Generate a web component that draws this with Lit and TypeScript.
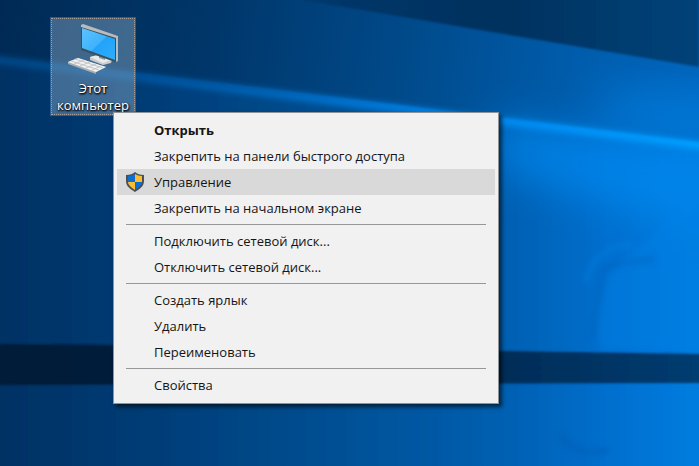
import { LitElement, html, css, svg, nothing } from "lit";
import { customElement, property } from "lit/decorators.js";
import { classMap } from "lit/directives/class-map.js";

interface MenuEntry {
  label: string;
  primary?: boolean;
  shield?: boolean;
  active?: boolean;
}

const GROUPS: MenuEntry[][] = [
  [
    { label: "Открыть", primary: true },
    { label: "Закрепить на панели быстрого доступа" },
    { label: "Управление", shield: true, active: true },
    { label: "Закрепить на начальном экране" },
  ],
  [{ label: "Подключить сетевой диск..." }, { label: "Отключить сетевой диск..." }],
  [{ label: "Создать ярлык" }, { label: "Удалить" }, { label: "Переименовать" }],
  [{ label: "Свойства" }],
];

@customElement("desktop-wallpaper")
export class DesktopWallpaper extends LitElement {
  static styles = css`
    :host { display: block; }
    .art { display: block; width: 100%; height: 100%; }
  `;

  render() {
    return html`
      <svg class="art" viewBox="0 0 699 466" preserveAspectRatio="none" aria-hidden="true">
        <defs>
          <linearGradient id="upper" x1="0" x2="1" y1="0" y2="0.1">
            <stop offset="0" stop-color="#002a55" />
            <stop offset="0.3" stop-color="#003669" />
            <stop offset="0.6" stop-color="#004b8c" />
            <stop offset="0.82" stop-color="#005cab" />
            <stop offset="1" stop-color="#0066be" />
          </linearGradient>
          <linearGradient id="corner" x1="0" x2="1" y1="0" y2="0">
            <stop offset="0" stop-color="#00386b" />
            <stop offset="0.5" stop-color="#00315f" />
            <stop offset="1" stop-color="#004379" />
          </linearGradient>
          <linearGradient id="lower" x1="0" x2="1" y1="0" y2="0">
            <stop offset="0" stop-color="#003163" />
            <stop offset="0.2" stop-color="#003b74" />
            <stop offset="0.5" stop-color="#005196" />
            <stop offset="0.72" stop-color="#0060b2" />
            <stop offset="0.86" stop-color="#006fce" />
            <stop offset="1" stop-color="#007ee2" />
          </linearGradient>
          <linearGradient id="beam" x1="0" x2="1" y1="0" y2="0">
            <stop offset="0" stop-color="#004a8a" />
            <stop offset="0.2" stop-color="#0055a0" />
            <stop offset="0.5" stop-color="#007bdc" />
            <stop offset="0.75" stop-color="#0090f6" />
            <stop offset="1" stop-color="#00a0ff" />
          </linearGradient>
          <linearGradient id="bar" x1="0" x2="1" y1="0" y2="0">
            <stop offset="0" stop-color="#001a38" />
            <stop offset="0.2" stop-color="#001b3b" />
            <stop offset="0.72" stop-color="#002d58" />
            <stop offset="1" stop-color="#003d73" />
          </linearGradient>
          <filter id="soft1" x="-10%" y="-50%" width="120%" height="200%"><feGaussianBlur stdDeviation="1" /></filter>
          <filter id="soft3" x="-20%" y="-50%" width="140%" height="200%"><feGaussianBlur stdDeviation="3" /></filter>
          <filter id="soft20" x="-60%" y="-60%" width="220%" height="220%"><feGaussianBlur stdDeviation="20" /></filter>
        </defs>
        <rect width="699" height="466" fill="url(#upper)" />
        <ellipse cx="690" cy="116" rx="100" ry="18" transform="rotate(8 690 116)" fill="#0080e2" opacity=".8" filter="url(#soft20)" />
        <path d="M303 0 699 67V-10H303Z" fill="url(#corner)" filter="url(#soft1)" />
        <path d="M-10 56 709 143V480H-10Z" fill="url(#lower)" filter="url(#soft1)" />
        <path d="M490 122 709 150V230L610 205 500 170Z" fill="#0089f0" opacity=".7" filter="url(#soft20)" />
        <path d="M-10 59 709 147" stroke="url(#beam)" stroke-width="7" fill="none" filter="url(#soft3)" />
        <path d="M90 69 709 146" stroke="url(#beam)" stroke-width="4" fill="none" opacity=".7" filter="url(#soft1)" />
        <path d="M600 350C592 305 605 268 635 250 665 225 690 190 720 180V350Z" fill="#0082e8" opacity=".4" filter="url(#soft3)" />
        <path d="M585 283C592 258 606 245 635 244" stroke="#0083e6" stroke-width="5" fill="none" opacity=".45" filter="url(#soft3)" />
        <path d="M601 275C605 262 630 262 655 259M601 278C601 300 594 318 591 338" stroke="#005fb9" stroke-width="5" fill="none" opacity=".45" filter="url(#soft3)" />
        <path d="M560 435C575 453 590 456 609 449" stroke="#005cb2" stroke-width="4" fill="none" opacity=".7" filter="url(#soft3)" />
        <path d="M-10 344C180 345 400 350 709 354V383L-10 385Z" fill="url(#bar)" filter="url(#soft1)" />
      </svg>
    `;
  }
}

@customElement("desktop-shortcut")
export class DesktopShortcut extends LitElement {
  @property() label = "";

  static styles = css`
    :host { display: block; }
    .tile {
      display: flex;
      flex-direction: column;
      align-items: center;
      gap: 4px;
      box-sizing: border-box;
      width: 100%;
      padding: 5px 0 0;
      border: 1px dotted #a8a098;
      outline: 1px solid rgb(90 150 200 / 45%);
      background: rgb(150 180 205 / 42%);
      color: #fff;
      font: 13px/17px "Open Sans", "Noto Sans", sans-serif;
      text-shadow: 1px 1px 2px #000, 0 1px 2px #000;
    }
    .glyph { display: block; width: 52px; height: 52px; }
  `;

  render() {
    return html`
      <button class="tile" type="button">
        <svg class="glyph" viewBox="0 0 52 52" aria-hidden="true">
          <defs>
            <linearGradient id="screen" x1="0" y1="0" x2="1" y2="1">
              <stop offset="0" stop-color="#5cc3ff" />
              <stop offset=".5" stop-color="#3eb2fb" />
              <stop offset=".51" stop-color="#22a3f8" />
              <stop offset="1" stop-color="#2fadff" />
            </linearGradient>
          </defs>
          <path d="M23 33 31 31 45 36 44 39 36 41 23 36Z" fill="#c9cdd0" />
          <path d="M23 33 31 31 44 36 36 39Z" fill="#e9ebec" />
          <path d="M32 30 38 32V36L32 34Z" fill="#8e979d" />
          <path d="M14 1 50 13V37L48 38 14 26Z" fill="#39515f" />
          <path d="M14 1 16 0 51 12V37L49 38V14L14 3Z" fill="#b9bcbc" />
          <path d="M15 4 48 15V36L15 24Z" fill="url(#screen)" />
          <path d="M1 38 11 34 39 43 29 48V50L1 40Z" fill="#a9adb0" />
          <path d="M1 38 11 34 39 43 29 48Z" fill="#f1f1f1" />
          <path d="M4 37 32 46M8 35 36 44M7 40 17 36M13 42 23 38M19 44 29 40M25 46 34 42" stroke="#c4c7ca" fill="none" />
        </svg>
        <span>${this.label}</span>
      </button>
    `;
  }
}

const shieldIcon = svg`
  <path d="M9 0C11 2 14 3 18 3V9C18 14 14 17 9 20 4 17 0 14 0 9V3C4 3 7 2 9 0Z" fill="#4c5052" />
  <path d="M9 2V10H2V4C5 4 7 3 9 2Z" fill="#0b6fd0" />
  <path d="M9 2C11 3 13 4 16 4V10H9Z" fill="#fdbb34" />
  <path d="M2 10H9V18C5 15 2 13 2 10Z" fill="#fdbb34" />
  <path d="M9 10H16C16 13 13 15 9 18Z" fill="#0b6fd0" />
`;

@customElement("context-menu")
export class ContextMenu extends LitElement {
  @property({ attribute: false }) groups: MenuEntry[][] = [];

  static styles = css`
    :host { display: block; }
    .menu {
      display: flex;
      flex-direction: column;
      padding: 4px 3px 5px;
      border: 1px solid #8f9396;
      background: #f1f1f1;
      box-shadow: 3px 3px 4px rgb(0 0 0 / 60%);
    }
    .item {
      display: grid;
      grid-template-columns: 18px auto;
      column-gap: 10px;
      align-items: center;
      height: 26px;
      padding: 0 90px 0 9px;
      border: 0;
      background: none;
      color: #151515;
      font: 13px/20px "Open Sans", "Noto Sans", sans-serif;
      text-align: left;
      white-space: nowrap;
    }
    .item:hover, .active { background: #d9d9d9; }
    .primary { font-weight: 700; }
    .label { grid-column: 2; grid-row: 1; }
    .shield { grid-column: 1; grid-row: 1; width: 18px; height: 20px; }
    .rule {
      align-self: stretch;
      height: 1px;
      margin: 3px 9px;
      border: 0;
      background: #979797;
    }
  `;

  render() {
    return html`
      <div class="menu" role="menu">
        ${this.groups.map(
          (group, i) => html`
            ${i ? html`<hr class="rule" />` : nothing}
            ${group.map(
              (entry) => html`
                <button
                  type="button"
                  role="menuitem"
                  class=${classMap({ item: true, primary: !!entry.primary, active: !!entry.active })}
                >
                  ${entry.shield
                    ? html`<svg class="shield" viewBox="0 0 18 20" aria-hidden="true">${shieldIcon}</svg>`
                    : nothing}
                  <span class="label">${entry.label}</span>
                </button>
              `,
            )}
          `,
        )}
      </div>
    `;
  }
}

@customElement("app-root")
export class AppRoot extends LitElement {
  static styles = css`
    :host {
      display: block;
      position: relative;
      min-height: 100vh;
      overflow: hidden;
      background: #004a8c;
    }
    .wallpaper { position: absolute; inset: 0; }
    .shortcut { position: absolute; left: 51px; top: 18px; width: 84px; }
    .context { position: absolute; left: 113px; top: 112px; }
  `;

  render() {
    return html`
      <desktop-wallpaper class="wallpaper"></desktop-wallpaper>
      <desktop-shortcut class="shortcut" label="Этот компьютер"></desktop-shortcut>
      <context-menu class="context" .groups=${GROUPS}></context-menu>
    `;
  }
}
